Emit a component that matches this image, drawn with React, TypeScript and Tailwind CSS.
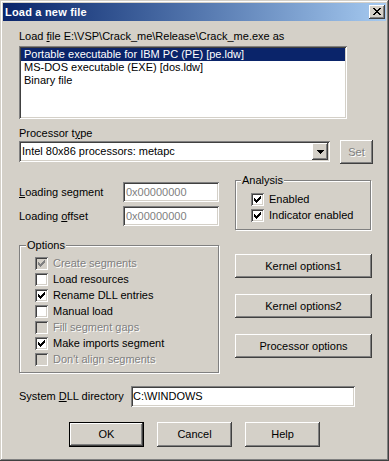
import React from "react";

const CHECK_PATH =
  "M6 0h1v1h-1z M5 1h2v1h-2z M0 2h1v1h-1z M4 2h3v1h-3z M0 3h2v1h-2z M3 3h3v1h-3z M0 4h5v1h-5z M1 5h3v1h-3z M2 6h1v1h-1z";

const CLOSE_PATH =
  "M0 0h2v1h-2z M6 0h2v1h-2z M1 1h2v1h-2z M5 1h2v1h-2z M2 2h4v1h-4z M3 3h2v1h-2z M2 4h4v1h-4z M1 5h2v1h-2z M5 5h2v1h-2z M0 6h2v1h-2z M6 6h2v1h-2z";

function CheckBox({ checked, disabled }: { checked?: boolean; disabled?: boolean }) {
  return (
    <div
      className={
        "w-[13px] h-[13px] shrink-0 p-[3px] shadow-[inset_1px_1px_#808080,inset_-1px_-1px_#ffffff,inset_2px_2px_#404040,inset_-2px_-2px_#d4d0c8] " +
        (disabled ? "bg-[#d4d0c8]" : "bg-white")
      }
    >
      {checked && (
        <svg width="7" height="7" viewBox="0 0 7 7" shapeRendering="crispEdges" className="block">
          <path d={CHECK_PATH} fill={disabled ? "#808080" : "#000000"} />
        </svg>
      )}
    </div>
  );
}

function CheckRow({
  label,
  checked,
  disabled,
}: {
  label: string;
  checked?: boolean;
  disabled?: boolean;
}) {
  return (
    <div className="h-[16px] flex items-center gap-[5px]">
      <CheckBox checked={checked} disabled={disabled} />
      <span
        className={
          "whitespace-nowrap " +
          (disabled ? "text-[#808080] [text-shadow:1px_1px_0_#ffffff]" : "text-black")
        }
      >
        {label}
      </span>
    </div>
  );
}

function Btn({ children, className }: { children: React.ReactNode; className: string }) {
  return (
    <div
      className={
        "flex items-center justify-center bg-[#d4d0c8] shadow-[inset_-1px_-1px_#404040,inset_1px_1px_#ffffff,inset_-2px_-2px_#808080] " +
        className
      }
    >
      {children}
    </div>
  );
}

export default function App() {
  return (
    <div className="w-[389px] h-[461px] bg-[#d4d0c8] p-[3px] shadow-[inset_-1px_-1px_#404040,inset_1px_1px_#d4d0c8,inset_-2px_-2px_#808080,inset_2px_2px_#ffffff] [font-family:'Liberation_Sans',Arial,sans-serif] text-[11px] leading-[13px] text-black flex flex-col overflow-hidden">
      {/* Title bar */}
      <div className="h-[18px] shrink-0 flex items-center bg-linear-to-r from-[#0a246a] to-[#a6caf0] pl-[2px] pr-[1px]">
        <span className="flex-1 text-white font-bold text-[11px] tracking-[0.2px]">Load a new file</span>
        <Btn className="w-[16px] h-[14px]">
          <svg width="8" height="7" viewBox="0 0 8 7" shapeRendering="crispEdges" className="block mb-[1px]">
            <path d={CLOSE_PATH} fill="#000000" />
          </svg>
        </Btn>
      </div>

      {/* Body */}
      <div className="flex flex-col pl-[16px]">
        <div className="mt-[9px] h-[13px] whitespace-nowrap">
          Load <span className="underline">f</span>ile E:\VSP\Crack_me\Release\Crack_me.exe as
        </div>

        {/* List box */}
        <div className="mt-[3px] w-[328px] h-[73px] bg-white p-[2px] shadow-[inset_1px_1px_#808080,inset_-1px_-1px_#ffffff,inset_2px_2px_#404040,inset_-2px_-2px_#d4d0c8]">
          <div className="h-[13px] bg-[#0a246a] text-white pl-[3px] whitespace-nowrap">
            Portable executable for IBM PC (PE) [pe.ldw]
          </div>
          <div className="h-[13px] pl-[3px] whitespace-nowrap">MS-DOS executable (EXE) [dos.ldw]</div>
          <div className="h-[13px] pl-[3px] whitespace-nowrap">Binary file</div>
        </div>

        <div className="mt-[8px] h-[13px] whitespace-nowrap">
          Processor t<span className="underline">y</span>pe
        </div>

        {/* Combo row */}
        <div className="flex items-start">
          <div className="mt-[1px] w-[311px] h-[21px] bg-white p-[2px] flex items-center shadow-[inset_1px_1px_#808080,inset_-1px_-1px_#ffffff,inset_2px_2px_#404040,inset_-2px_-2px_#d4d0c8]">
            <span className="flex-1 pl-[1px] whitespace-nowrap">Intel 80x86 processors: metapc</span>
            <Btn className="w-[16px] h-[17px]">
              <svg width="7" height="4" viewBox="0 0 7 4" shapeRendering="crispEdges" className="block">
                <path d="M0 0h7v1h-7z M1 1h5v1h-5z M2 2h3v1h-3z M3 3h1v1h-1z" fill="#000000" />
              </svg>
            </Btn>
          </div>
          <Btn className="ml-[10px] w-[33px] h-[24px]">
            <span className="text-[#808080] [text-shadow:1px_1px_0_#ffffff]">Set</span>
          </Btn>
        </div>

        {/* Two columns */}
        <div className="flex">
          <div className="w-[200px] flex flex-col">
            <div className="mt-[18px] h-[20px] flex items-center">
              <span className="w-[104px] whitespace-nowrap">
                <span className="underline">L</span>oading segment
              </span>
              <div className="w-[96px] h-[20px] bg-white pl-[3px] flex items-center text-[#808080] shadow-[inset_1px_1px_#808080,inset_-1px_-1px_#ffffff,inset_2px_2px_#404040,inset_-2px_-2px_#d4d0c8]">
                0x00000000
              </div>
            </div>
            <div className="mt-[4px] h-[20px] flex items-center">
              <span className="w-[104px] whitespace-nowrap">
                Loading <span className="underline">o</span>ffset
              </span>
              <div className="w-[96px] h-[20px] bg-white pl-[3px] flex items-center text-[#808080] shadow-[inset_1px_1px_#808080,inset_-1px_-1px_#ffffff,inset_2px_2px_#404040,inset_-2px_-2px_#d4d0c8]">
                0x00000000
              </div>
            </div>

            {/* Options group */}
            <div className="relative mt-[19px] w-[200px] h-[128px] border border-[#808080] shadow-[inset_1px_1px_#ffffff,1px_1px_#ffffff] pt-[9px] pl-[15px] flex flex-col">
              <span className="absolute top-[-7px] left-[6px] px-[1px] bg-[#d4d0c8] leading-[13px]">Options</span>
              <CheckRow label="Create segments" checked disabled />
              <CheckRow label="Load resources" />
              <CheckRow label="Rename DLL entries" checked />
              <CheckRow label="Manual load" />
              <CheckRow label="Fill segment gaps" disabled />
              <CheckRow label="Make imports segment" checked />
              <CheckRow label="Don't align segments" disabled />
            </div>
          </div>

          <div className="ml-[16px] w-[137px] flex flex-col">
            {/* Analysis group */}
            <div className="relative mt-[16px] w-[136px] h-[50px] border border-[#808080] shadow-[inset_1px_1px_#ffffff,1px_1px_#ffffff] pt-[10px] pl-[15px] flex flex-col">
              <span className="absolute top-[-7px] left-[5px] px-[1px] bg-[#d4d0c8] leading-[13px]">Analysis</span>
              <CheckRow label="Enabled" checked />
              <CheckRow label="Indicator enabled" checked />
            </div>
            <Btn className="mt-[24px] w-[137px] h-[24px]">Kernel options1</Btn>
            <Btn className="mt-[16px] w-[137px] h-[24px]">Kernel options2</Btn>
            <Btn className="mt-[16px] w-[137px] h-[24px]">Processor options</Btn>
          </div>
        </div>

        {/* System DLL directory */}
        <div className="mt-[13px] flex items-center">
          <span className="w-[112px] whitespace-nowrap">
            System <span className="underline">D</span>LL directory
          </span>
          <div className="w-[224px] h-[21px] bg-white pl-[2px] flex items-center shadow-[inset_1px_1px_#808080,inset_-1px_-1px_#ffffff,inset_2px_2px_#404040,inset_-2px_-2px_#d4d0c8]">
            C:\WINDOWS
          </div>
        </div>

        {/* Buttons */}
        <div className="mt-[15px] ml-[50px] flex gap-[13px]">
          <div className="w-[75px] h-[25px] border border-black flex items-center justify-center bg-[#d4d0c8] shadow-[inset_-1px_-1px_#404040,inset_1px_1px_#ffffff,inset_-2px_-2px_#808080]">
            OK
          </div>
          <Btn className="w-[75px] h-[25px]">Cancel</Btn>
          <Btn className="w-[75px] h-[25px]">Help</Btn>
        </div>
      </div>
    </div>
  );
}
